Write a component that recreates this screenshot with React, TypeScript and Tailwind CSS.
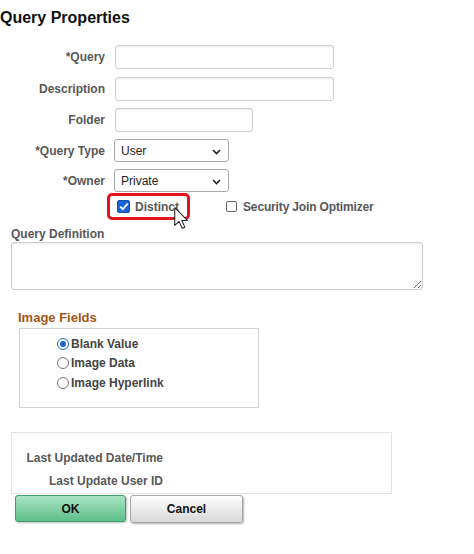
import React from 'react';

const labelCls = "w-[105px] shrink-0 text-right text-[12px] font-bold text-[#585858]";
const inputCls = "h-[24px] rounded-[3px] border border-[#cfcfcf] bg-white shadow-[inset_0_1px_2px_rgba(0,0,0,0.08)] outline-none";

function Chevron() {
  return (
    <svg width="9" height="6" viewBox="0 0 9 6" className="absolute right-[7px] top-[9px]">
      <path d="M1 1l3.5 3.5L8 1" fill="none" stroke="#222" strokeWidth="1.6" />
    </svg>
  );
}

function Select({ value }: { value: string }) {
  return (
    <div className="relative ml-[9px] flex h-[23px] w-[115px] items-center rounded-[3px] border border-[#a9a9a9] bg-white pl-[6px] text-[12px] text-[#222]">
      {value}
      <Chevron />
    </div>
  );
}

function Radio({ checked, label }: { checked?: boolean; label: string }) {
  return (
    <div className="flex h-[19.5px] items-center">
      {checked ? (
        <span className="flex h-[12px] w-[12px] items-center justify-center rounded-full border-[1.5px] border-[#1a62d6]">
          <span className="h-[6px] w-[6px] rounded-full bg-[#1a62d6]" />
        </span>
      ) : (
        <span className="h-[12px] w-[12px] rounded-full border border-[#767676]" />
      )}
      <span className="ml-[2px] text-[12px] font-bold text-[#444]">{label}</span>
    </div>
  );
}

export default function App() {
  return (
    <div className="relative h-[554px] w-[474px] overflow-hidden bg-white font-['Liberation_Sans',Arial,sans-serif]">
      <h1 className="pt-[8px] text-[16px] font-bold leading-[20px] text-[#111]">Query Properties</h1>

      <div className="mt-[17px] flex items-center">
        <span className={labelCls}>*Query</span>
        <input className={`${inputCls} ml-[10px] w-[219px]`} />
      </div>
      <div className="mt-[8px] flex items-center">
        <span className={labelCls}>Description</span>
        <input className={`${inputCls} ml-[10px] w-[219px]`} />
      </div>
      <div className="mt-[7px] flex items-center">
        <span className={labelCls}>Folder</span>
        <input className={`${inputCls} ml-[10px] h-[23px] w-[138px]`} />
      </div>
      <div className="mt-[7px] flex items-center">
        <span className={labelCls}>*Query Type</span>
        <Select value="User" />
      </div>
      <div className="mt-[7px] flex items-center">
        <span className={labelCls}>*Owner</span>
        <Select value="Private" />
      </div>

      <div className="mt-[1px] flex items-center">
        <span className="ml-[107px] flex h-[27px] w-[83px] items-center rounded-[5px] border-[3px] border-[#e3121c] pl-[7px]">
          <span className="flex h-[13px] w-[13px] items-center justify-center rounded-[2px] border border-[#1b4fa8] bg-[#1a62d6]">
            <svg width="10" height="9" viewBox="0 0 10 9">
              <path d="M1.2 4.6l2.6 2.6L8.8 1.6" fill="none" stroke="#fff" strokeWidth="1.8" />
            </svg>
          </span>
          <span className="ml-[5px] text-[12px] font-bold text-[#585858]">Distinct</span>
        </span>
        <span className="ml-[36px] h-[11px] w-[11px] rounded-[2px] border border-[#666] bg-white" />
        <span className="ml-[6px] text-[12px] font-bold tracking-[-0.15px] text-[#585858]">Security Join Optimizer</span>
      </div>

      <div className="ml-[11px] mt-[7px] text-[12px] font-bold leading-[14px] text-[#585858]">Query Definition</div>
      <textarea className="ml-[11px] mt-[1px] block h-[48px] w-[412px] rounded-[3px] border border-[#cfcfcf] shadow-[inset_0_1px_2px_rgba(0,0,0,0.08)] outline-none" />

      <div className="ml-[18px] mt-[20px] text-[13px] font-bold leading-[16px] text-[#a35716]">Image Fields</div>
      <div className="ml-[19px] mt-[2px] h-[80px] w-[240px] border border-[#d4d4d4] pl-[37px] pt-[5px]">
        <Radio checked label="Blank Value" />
        <Radio label="Image Data" />
        <Radio label="Image Hyperlink" />
      </div>

      <div className="ml-[11px] mt-[24px] flex h-[62px] w-[381px] flex-col border border-[#e6e6dc] pt-[13px]">
        <div className="flex h-[23px] items-center">
          <span className="w-[151px] text-right text-[12px] font-bold text-[#585858]">Last Updated Date/Time</span>
        </div>
        <div className="flex h-[23px] items-center">
          <span className="w-[151px] text-right text-[12px] font-bold text-[#585858]">Last Update User ID</span>
        </div>
      </div>

      <div className="mt-[1px] flex items-start">
        <button className="ml-[15px] h-[27px] w-[111px] rounded-[3px] border border-[#3f9c6b] bg-gradient-to-b from-[#a9e3c3] to-[#5dbf8b] text-[12px] font-bold text-[#111] shadow-[1px_1px_2px_rgba(0,0,0,0.25)]">
          OK
        </button>
        <button className="ml-[4px] h-[28px] w-[113px] rounded-[3px] border border-[#a6a6a6] bg-gradient-to-b from-[#fdfdfd] to-[#d9d9d9] text-[12px] font-bold text-[#111] shadow-[1px_1px_2px_rgba(0,0,0,0.3)]">
          Cancel
        </button>
      </div>

      <svg width="14" height="22" viewBox="0 0 12 19" className="absolute left-[174px] top-[207px]">
        <path d="M0.6 0.6V15.8L4.3 12.4L7 18.4L9.3 17.4L6.7 11.6H11.5Z" fill="#fff" stroke="#222" strokeWidth="0.9" strokeLinejoin="round" />
      </svg>
    </div>
  );
}
